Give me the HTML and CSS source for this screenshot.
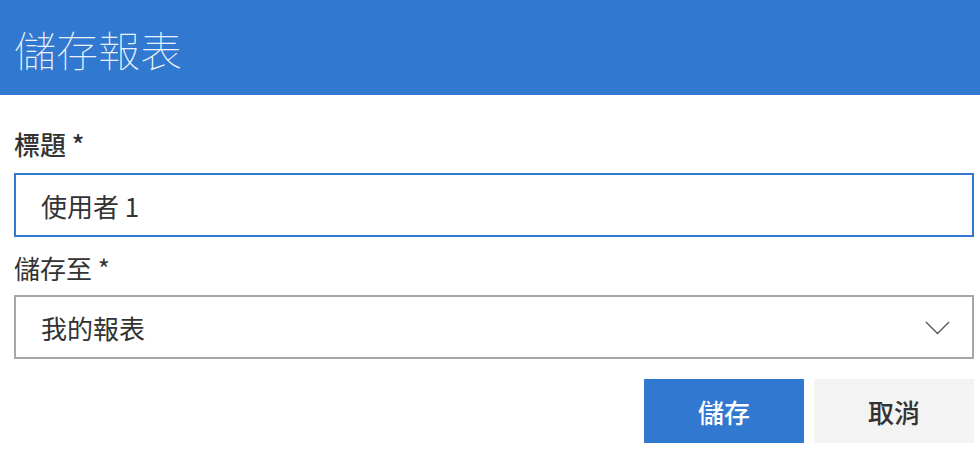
FILE: index.html
```html
<!DOCTYPE html>
<html lang="zh-Hant">
<head>
<meta charset="utf-8">
<link rel="stylesheet" href="styles.css">
</head>
<body>
<div class="dialog">
  <header class="header"><h1 class="title">儲存報表</h1></header>
  <div class="body">
    <label class="label label-bold">標題 *</label>
    <div class="input input-focus">使用者 1</div>
    <label class="label label-plain">儲存至 *</label>
    <div class="input select">
      <span>我的報表</span>
      <svg class="chevron" width="25" height="14" viewBox="0 0 25 14"><path d="M1 1 L12.5 12.5 L24 1" fill="none" stroke="#555" stroke-width="1.4"/></svg>
    </div>
    <div class="actions">
      <button class="btn btn-primary">儲存</button>
      <button class="btn btn-secondary">取消</button>
    </div>
  </div>
</div>
</body>
</html>
```
FILE: styles.css
```css
html, body { margin: 0; padding: 0; background: #fff; }
body { font-family: "Noto Sans CJK TC", "Noto Sans", sans-serif; color: #333; }
.dialog { width: 980px; height: 454px; overflow: hidden; }
.header { background: #3178d0; height: 95px; display: flex; align-items: center; padding-left: 14px; box-sizing: border-box; }
.title { margin: 0; font-weight: 100; font-size: 42px; color: rgba(255,255,255,0.92); line-height: 1; padding-top: 2px; }
.body { padding: 0 6px 0 14px; display: flex; flex-direction: column; }
.label { font-size: 26px; line-height: 34px; color: #333; display: block; }
.label-bold { font-weight: 500; margin-top: 32px; margin-bottom: 12px; }
.label-plain { margin-bottom: 10px; }
.input { height: 64px; box-sizing: border-box; border: 2px solid #a6a6a6; display: flex; align-items: center; padding-left: 25px; font-size: 26px; color: #333; }
.input-focus { border-color: #3178d0; margin-bottom: 14px; }
.select { justify-content: space-between; padding-right: 22px; }
.chevron { display: block; margin-top: 2px; }
.actions { display: flex; justify-content: flex-end; gap: 10px; margin-top: 20px; }
.btn { width: 160px; height: 64px; border: 0; font-family: inherit; font-size: 26px; font-weight: 500; cursor: pointer; padding: 0; }
.btn-primary { background: #3178d0; color: #fff; }
.btn-secondary { background: #f3f3f3; color: #333; }
```
